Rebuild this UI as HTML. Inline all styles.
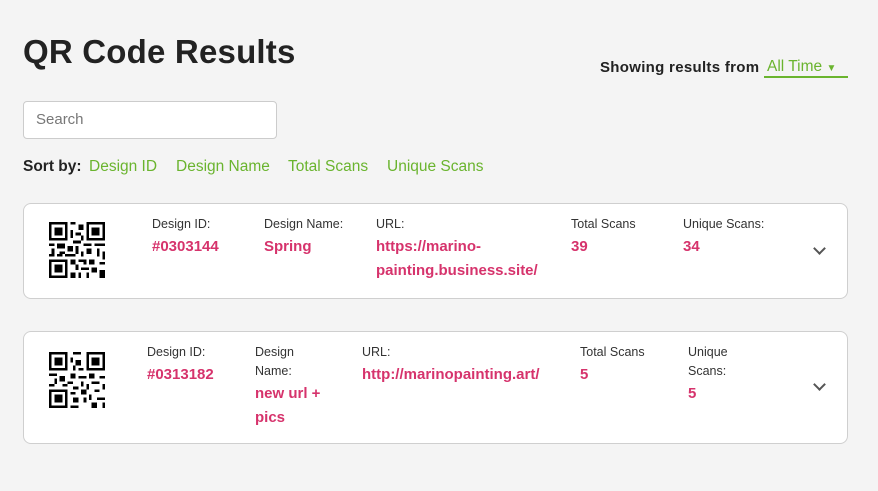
<!DOCTYPE html>
<html><head><style>
body{margin:0;background:#f4f4f4;font-family:"Liberation Sans",sans-serif;color:#222;width:878px;height:491px;overflow:hidden;position:relative}
.a{position:absolute}
h1{position:absolute;left:23px;top:33px;margin:0;font-size:33px;font-weight:bold;color:#222;letter-spacing:0.2px}
.green{color:#6ab42e}
.card{position:absolute;left:23px;width:823px;background:#fff;border:1px solid #cfcfcf;border-radius:8px}
.lb{font-size:12.5px;color:#333;line-height:19px}
.v{font-size:15px;font-weight:bold;color:#d6336c;line-height:24px;margin-top:1px}
.chev{position:absolute;width:7px;height:7px;border-right:2px solid #555;border-bottom:2px solid #555;transform:rotate(45deg)}
.s{position:absolute;top:158px;font-size:15.5px}
</style></head><body>
<h1>QR Code Results</h1>
<div class="a" style="left:600px;top:59px;font-size:15px;font-weight:bold;color:#222;letter-spacing:0.3px;white-space:nowrap">Showing results from</div>
<div class="a green" style="left:764px;top:58px;width:84px;height:20px;border-bottom:2px solid #6ab42e;font-size:15.5px;padding-left:3px;box-sizing:border-box">All Time <span style="font-size:10px">▼</span></div>
<div class="a" style="left:23px;top:101px;width:252px;height:36px;background:#fff;border:1px solid #ccc;border-radius:4px"></div>
<div class="a" style="left:36px;top:111px;font-size:15px;color:#777">Search</div>
<div class="s"><b style="position:absolute;left:23px;white-space:nowrap">Sort by:</b></div>
<div class="s green" style="left:89px">Design&nbsp;ID</div>
<div class="s green" style="left:176px;white-space:nowrap">Design Name</div>
<div class="s green" style="left:288px;white-space:nowrap">Total Scans</div>
<div class="s green" style="left:387px;white-space:nowrap">Unique Scans</div>

<div class="card" style="top:203px;height:94px">
<svg class="a" style="left:25px;top:18px" width="56" height="56" viewBox="0 0 21 21" shape-rendering="crispEdges">
<g fill="#000"><path d="M0 0h7v7H0zM14 0h7v7h-7zM0 14h7v7H0z"/></g><g fill="#fff"><path d="M1 1h5v5H1zM15 1h5v5h-5zM1 15h5v5H1z"/></g><g fill="#000"><path d="M2 2h3v3H2zM16 2h3v3h-3zM2 16h3v3H2z"/>
<path d="M8 0h2v1H8zM11 1h2v2h-2zM8 3h1v3H8zM10 4h2v1h-2zM12 5h1v2h-1zM9 7h3v1H9zM0 8h2v1H0zM3 8h3v2H3zM7 9h2v2H7zM10 9h1v3h-1zM13 8h3v1h-3zM17 8h4v1h-4zM14 10h2v2h-2zM18 10h1v3h-1zM1 10h1v3H1zM4 11h2v1H4zM12 11h1v2h-1zM20 11h1v3h-1zM0 12h1v1H0zM6 12h4v1H6zM8 14h2v2H8zM11 14h3v1h-3zM15 14h2v2h-2zM19 15h2v1h-2zM10 16h1v2h-1zM12 17h3v1h-3zM16 17h2v2h-2zM8 19h2v2H8zM11 19h1v2h-1zM14 19h1v2h-1zM19 18h2v3h-2zM13 15h1v1h-1zM3 12h2v1H3z"/></g></svg>
<div class="a" style="left:128px;top:11px"><div class="lb">Design ID:</div><div class="v">#0303144</div></div>
<div class="a" style="left:240px;top:11px"><div class="lb">Design Name:</div><div class="v">Spring</div></div>
<div class="a" style="left:352px;top:11px"><div class="lb">URL:</div><div class="v">https://marino-<br>painting.business.site/</div></div>
<div class="a" style="left:547px;top:11px"><div class="lb">Total Scans</div><div class="v">39</div></div>
<div class="a" style="left:659px;top:11px"><div class="lb">Unique Scans:</div><div class="v">34</div></div>
<div class="chev" style="left:791px;top:40px"></div>
</div>

<div class="card" style="top:331px;height:111px">
<svg class="a" style="left:25px;top:20px" width="56" height="56" viewBox="0 0 21 21" shape-rendering="crispEdges">
<g fill="#000"><path d="M0 0h7v7H0zM14 0h7v7h-7zM0 14h7v7H0z"/></g><g fill="#fff"><path d="M1 1h5v5H1zM15 1h5v5h-5zM1 15h5v5H1z"/></g><g fill="#000"><path d="M2 2h3v3H2zM16 2h3v3h-3zM2 16h3v3H2z"/>
<path d="M9 0h3v1H9zM8 2h1v2H8zM10 3h2v2h-2zM9 5h1v2H9zM11 6h2v1h-2zM0 8h3v1H0zM4 9h2v2H4zM8 8h2v2H8zM11 9h3v1h-3zM15 8h2v2h-2zM19 9h2v1h-2zM2 10h1v2H2zM7 11h2v1H7zM12 11h1v2h-1zM16 11h3v1h-3zM0 12h2v1H0zM5 12h2v1H5zM9 13h2v1H9zM14 12h1v2h-1zM20 12h1v2h-1zM8 15h2v1H8zM12 14h2v2h-2zM17 14h2v1h-2zM15 16h1v2h-1zM9 17h2v2H9zM13 17h1v2h-1zM18 17h3v1h-3zM8 20h3v1H8zM16 19h2v2h-2zM20 19h1v2h-1z"/></g></svg>
<div class="a" style="left:123px;top:11px"><div class="lb">Design ID:</div><div class="v">#0313182</div></div>
<div class="a" style="left:231px;top:11px"><div class="lb">Design<br>Name:</div><div class="v">new url +<br>pics</div></div>
<div class="a" style="left:338px;top:11px"><div class="lb">URL:</div><div class="v">http://marinopainting.art/</div></div>
<div class="a" style="left:556px;top:11px"><div class="lb">Total Scans</div><div class="v">5</div></div>
<div class="a" style="left:664px;top:11px"><div class="lb">Unique<br>Scans:</div><div class="v">5</div></div>
<div class="chev" style="left:791px;top:48px"></div>
</div>
</body></html>
